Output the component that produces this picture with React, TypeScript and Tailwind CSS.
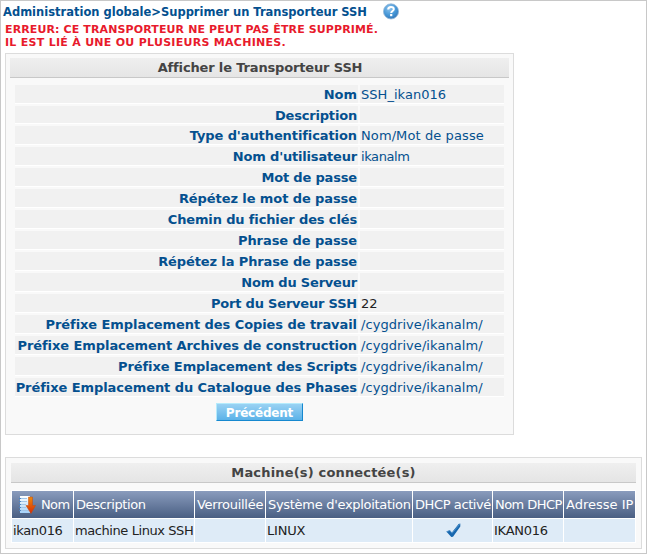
import React from "react";

type Row = { label: string; value?: string; fit: string; vfit?: string; dark?: boolean; h?: string };

const rows: Row[] = [
  { label: "Nom", value: "SSH_ikan016", fit: "tracking-[0px]", vfit: "tracking-[0.04px]" },
  { label: "Description", fit: "tracking-[-0.18px]", h: "h-[17px]" },
  { label: "Type d'authentification", value: "Nom/Mot de passe", fit: "tracking-[-0.09px]", vfit: "tracking-[0.1px]" },
  { label: "Nom d'utilisateur", value: "ikanalm", fit: "tracking-[-0.18px]", vfit: "tracking-[-0.4px]" },
  { label: "Mot de passe", fit: "tracking-[-0.17px]" },
  { label: "Répétez le mot de passe", fit: "tracking-[-0.09px]" },
  { label: "Chemin du fichier des clés", fit: "tracking-[-0.14px]" },
  { label: "Phrase de passe", fit: "tracking-[-0.07px]" },
  { label: "Répétez la Phrase de passe", fit: "tracking-[-0.12px]" },
  { label: "Nom du Serveur", fit: "tracking-[-0.2px]" },
  { label: "Port du Serveur SSH", value: "22", fit: "tracking-[-0.2px]", vfit: "tracking-[0px]", dark: true },
  { label: "Préfixe Emplacement des Copies de travail", value: "/cygdrive/ikanalm/", fit: "tracking-[-0.07px]", vfit: "tracking-[0.06px]" },
  { label: "Préfixe Emplacement Archives de construction", value: "/cygdrive/ikanalm/", fit: "tracking-[-0.07px]", vfit: "tracking-[0.06px]" },
  { label: "Préfixe Emplacement des Scripts", value: "/cygdrive/ikanalm/", fit: "tracking-[-0.1px]", vfit: "tracking-[0.06px]" },
  { label: "Préfixe Emplacement du Catalogue des Phases", value: "/cygdrive/ikanalm/", fit: "tracking-[-0.07px]", vfit: "tracking-[0.06px]" },
];

function HelpIcon() {
  return (
    <svg width="16" height="17" viewBox="0 0 16 17" className="ml-[16px] mt-[2px] shrink-0">
      <defs>
        <radialGradient id="help" cx="40%" cy="30%" r="75%">
          <stop offset="0" stopColor="#8ec4ee" />
          <stop offset="0.6" stopColor="#4596d6" />
          <stop offset="1" stopColor="#3274b6" />
        </radialGradient>
      </defs>
      <circle cx="8" cy="8.4" r="7.6" fill="url(#help)" stroke="#9dbbd8" strokeWidth="0.8" />
      <path d="M5.2 6.6C5.2 4.7 6.3 4 8 4s2.8.9 2.8 2.3c0 1.7-2.6 1.8-2.6 3.7" fill="none" stroke="#fff" strokeWidth="2" />
      <rect x="7.1" y="11" width="2.2" height="2.2" fill="#fff" />
    </svg>
  );
}

function SortIcon() {
  return (
    <svg width="17" height="18" viewBox="0 0 17 18" className="shrink-0">
      <defs>
        <linearGradient id="arrow" x1="0" y1="0" x2="0" y2="1">
          <stop offset="0" stopColor="#f08a08" />
          <stop offset="1" stopColor="#d52b08" />
        </linearGradient>
        <linearGradient id="sheet" x1="0" y1="0" x2="0" y2="1">
          <stop offset="0" stopColor="#ffffff" />
          <stop offset="1" stopColor="#a5d2fa" />
        </linearGradient>
      </defs>
      <path d="M1 0h10v17H1z" fill="url(#sheet)" />
      <path d="M2 2.5h6M2 5.5h6M2 8.5h5M2 11.5h5M2 14.5h8" stroke="#a3c6e8" strokeWidth="1" />
      <path d="M0 2.5h2M0 5.5h2M0 8.5h2M0 11.5h2M0 14.5h2" stroke="#4b86c4" strokeWidth="1" />
      <path d="M9.5 1h4v8.5h3L12 17.5 7 9.5h2.5z" fill="url(#arrow)" stroke="#c44a10" strokeWidth="0.5" />
    </svg>
  );
}

function Check() {
  return (
    <svg width="15" height="15" viewBox="0 0 15 15">
      <path d="M.3 8.6l3.6-1.4 2 2.4L12.6 1 14.3.4v3L7 13.7 5.3 14z" fill="#1767ae" />
      <path d="M.8 8.6l2.9-1 2.3 2.6L13.8 1.2" fill="none" stroke="#5798d1" strokeWidth=".8" />
    </svg>
  );
}

const cols = "grid grid-cols-[61px_120px_70px_146px_79px_70px_71px] gap-px";
const head = "flex h-[27px] items-center bg-linear-to-b from-[#8a9cbd] to-[#4a5f83] pl-[2px] text-white";
const cell = "flex h-[23px] items-center bg-[#deebf7] pl-px";
const title = "flex justify-center border-b border-[#c8c8c8] bg-linear-to-b from-[#efefef] to-[#e5e5e5] font-bold leading-[20px] text-[#444]";

export default function App() {
  return (
    <div className="h-[554px] w-[647px] overflow-hidden border border-[#c8c8c8] bg-white font-['DejaVu_Sans',Verdana,sans-serif] text-[13px] leading-[18px] whitespace-nowrap text-[#04508f]">
      <div className="flex h-[21px] pl-[2px] text-[11.5px] font-bold">
        <span className="pt-[2px] tracking-[0px]">Administration globale&gt;Supprimer un Transporteur SSH</span>
        <HelpIcon />
      </div>
      <div className="h-[31px] pt-px pl-[4px] text-[11px] leading-[13px] font-bold text-[#e81a2c]">
        <div><span className="tracking-[0.12px]">ERREUR: CE TRANSPORTEUR NE PEUT PAS ÊTRE SUPPRIMÉ.</span></div>
        <div><span className="tracking-[0.28px]">IL EST LIÉ À UNE OU PLUSIEURS MACHINES.</span></div>
      </div>

      <section className="ml-[4px] h-[382px] w-[509px] border border-[#dcdcdc] bg-[#f9f9f9] px-[4px] pt-[4px]">
        <div className={`${title} h-[20px]`}><span className="pl-px tracking-[-0.15px]">Afficher le Transporteur SSH</span></div>
        <div className="mt-[7px] pr-[5px] pl-[5px] leading-[20px]">
          {rows.map((r) => (
            <div key={r.label} className="mb-[2px] grid grid-cols-[343px_144px] gap-[2px] border-b border-white">
              <div className={`${r.h ?? "h-[18px]"} bg-[#f1f1f1] pr-px text-right font-bold`}><span className={r.fit}>{r.label}</span></div>
              <div className={`${r.h ?? "h-[18px]"} bg-[#f1f1f1] pl-px ${r.dark ? "text-[#222]" : ""}`}><span className={r.vfit}>{r.value}</span></div>
            </div>
          ))}
        </div>
        <button className="mt-[6px] ml-[206px] flex h-[18px] w-[87px] items-center justify-center border border-t-[#b5ebfc] border-r-[#1688cf] border-b-[#1688cf] border-l-[#b5ebfc] bg-linear-to-b from-[#99d2f3] to-[#5bb2e8] text-[12px] font-bold text-white">
          <span className="pt-px tracking-[-0.2px]">Précédent</span>
        </button>
      </section>

      <section className="mt-[22px] ml-[4px] h-[92px] w-[637px] border border-[#dcdcdc] bg-[#f9f9f9] px-[5px] pt-[5px]">
        <div className={`${title} h-[20px]`}><span className="tracking-[0.17px]">Machine(s) connectée(s)</span></div>
        <div className="mt-[7px] w-[625px] border border-white bg-white">
          <div className={`${cols} mb-px`}>
            <div className={`${head} gap-[5px] pl-[7px]`}><SortIcon /><span className="tracking-[-0.6px]">Nom</span></div>
            <div className={head}><span className="tracking-[-0.4px]">Description</span></div>
            <div className={head}><span className="tracking-[-0.27px]">Verrouillée</span></div>
            <div className={head}><span className="tracking-[-0.3px]">Système d'exploitation</span></div>
            <div className={head}><span className="tracking-[-0.4px]">DHCP activé</span></div>
            <div className={head}><span className="tracking-[-0.55px]">Nom DHCP</span></div>
            <div className={head}><span className="tracking-[0px]">Adresse IP</span></div>
          </div>
          <div className={`${cols} text-[#222]`}>
            <div className={cell}><span className="tracking-[-0.35px]">ikan016</span></div>
            <div className={cell}><span className="tracking-[-0.42px]">machine Linux SSH</span></div>
            <div className={cell} />
            <div className={cell}><span className="tracking-[-0.2px]">LINUX</span></div>
            <div className={`${cell} justify-center`}><Check /></div>
            <div className={cell}><span className="tracking-[-0.25px]">IKAN016</span></div>
            <div className={cell} />
          </div>
        </div>
      </section>
    </div>
  );
}
